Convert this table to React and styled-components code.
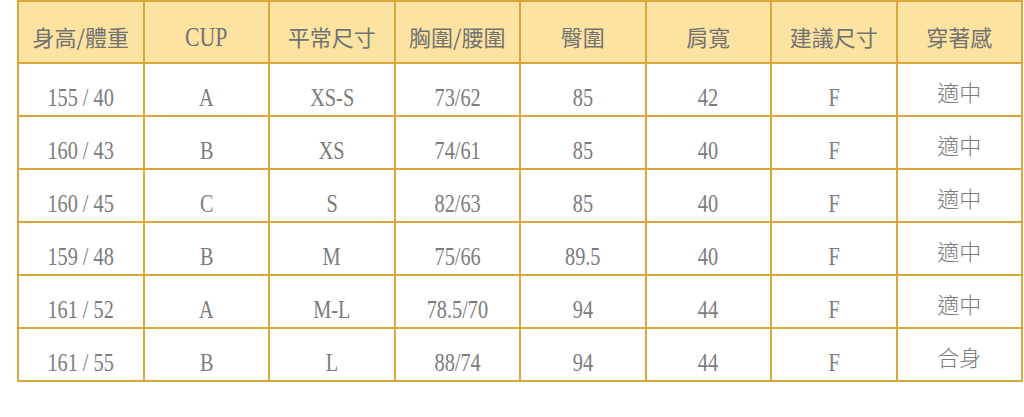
import React from 'react';
import styled, { createGlobalStyle } from 'styled-components';

const GlobalStyle = createGlobalStyle`
  body {
    margin: 0;
    background: #ffffff;
  }
`;

const Page = styled.div`
  padding: 0 0 0 17px;
`;

const Table = styled.table`
  width: 1006px;
  table-layout: fixed;
  border-collapse: collapse;
  border: 2px solid #d8a93a;
`;

const HeadCell = styled.th`
  height: 62px;
  padding: 7px 0 0;
  box-sizing: border-box;
  background: #fde3a1;
  border: 2px solid #d8a93a;
  color: #727272;
  font-family: "Noto Sans CJK TC", "Noto Sans CJK SC", sans-serif;
  font-size: 22px;
  font-weight: 400;
  text-align: center;
  white-space: nowrap;
`;

const Cell = styled.td`
  height: 53px;
  padding: ${({ $cjk }) => ($cjk ? '3px' : '12px')} 0 0;
  box-sizing: border-box;
  border: 2px solid #d8a93a;
  color: #7c7c7c;
  font-family: "Noto Sans CJK TC", sans-serif;
  font-size: 22px;
  font-weight: 300;
  text-align: center;
  white-space: nowrap;
`;

// narrow serif latin, like a Ming font's half-width glyphs
const Narrow = styled.span`
  display: inline-block;
  font-family: "Liberation Serif", serif;
  font-size: ${({ $size }) => $size || 26}px;
  font-weight: 400;
  transform: scaleX(0.78);
  line-height: 1;
`;

const headers = ['身高/體重', 'CUP', '平常尺寸', '胸圍/腰圍', '臀圍', '肩寬', '建議尺寸', '穿著感'];

const rows = [
  ['155 / 40', 'A', 'XS-S', '73/62', '85', '42', 'F', '適中'],
  ['160 / 43', 'B', 'XS', '74/61', '85', '40', 'F', '適中'],
  ['160 / 45', 'C', 'S', '82/63', '85', '40', 'F', '適中'],
  ['159 / 48', 'B', 'M', '75/66', '89.5', '40', 'F', '適中'],
  ['161 / 52', 'A', 'M-L', '78.5/70', '94', '44', 'F', '適中'],
  ['161 / 55', 'B', 'L', '88/74', '94', '44', 'F', '合身'],
];

const App = () => (
  <Page>
    <GlobalStyle />
    <Table>
      <thead>
        <tr>
          {headers.map((h) =>
            h === 'CUP' ? (
              <HeadCell key={h}>
                <Narrow $size={28}>{h}</Narrow>
              </HeadCell>
            ) : (
              <HeadCell key={h}>{h}</HeadCell>
            ),
          )}
        </tr>
      </thead>
      <tbody>
        {rows.map((row, i) => (
          <tr key={i}>
            {row.map((v, j) =>
              j === 7 ? (
                <Cell key={j} $cjk>
                  {v}
                </Cell>
              ) : (
                <Cell key={j}>
                  <Narrow>{v}</Narrow>
                </Cell>
              ),
            )}
          </tr>
        ))}
      </tbody>
    </Table>
  </Page>
);

export default App;
